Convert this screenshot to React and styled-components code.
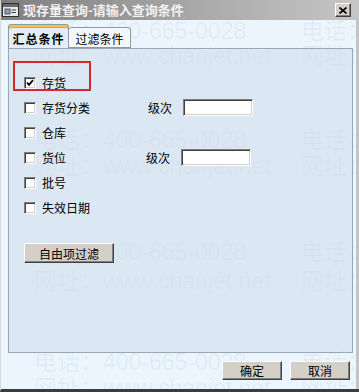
import React from 'react'
import styled, { createGlobalStyle } from 'styled-components'

const Global = createGlobalStyle`
  html, body {
    margin: 0;
    padding: 0;
    background: #ffffff;
  }
  body {
    font-family: "Noto Sans CJK SC", "Liberation Sans", sans-serif;
    font-size: 12px;
  }
`

const Window = styled.div`
  position: relative;
  width: 359px;
  height: 392px;
  box-sizing: border-box;
  display: flex;
  flex-direction: column;
  background: #ebf5fe;
  border-left: 1px solid #d8d8d8;
  border-bottom: 3px solid #3c3c3c;
  overflow: hidden;
`

const TitleBar = styled.div`
  height: 20px;
  flex: none;
  display: flex;
  align-items: center;
  padding: 0 8px 0 1px;
  background: linear-gradient(to right, #7e7e7e, #a9a9a9 55%, #c6c6c6);
`

const Title = styled.div`
  flex: 1;
  margin-left: 4px;
  color: #f2f2f2;
  font-weight: 700;
  font-size: 13px;
  line-height: 20px;
  white-space: nowrap;
`

const CloseBtn = styled.div`
  width: 16px;
  height: 14px;
  box-sizing: border-box;
  display: flex;
  align-items: center;
  justify-content: center;
  background: #d4d0c8;
  border-top: 1px solid #ffffff;
  border-left: 1px solid #ffffff;
  border-right: 1px solid #404040;
  border-bottom: 1px solid #404040;
  box-shadow: inset -1px -1px 0 #808080;
`

const Body = styled.div`
  position: relative;
  flex: 1;
  display: flex;
  flex-direction: column;
  padding: 4px 0 0 7px;
  border-right: 3px solid #c4c4c4;
`

const Watermark = styled.div`
  position: absolute;
  inset: 0;
  pointer-events: none;
  z-index: 0;
`

const Mark = styled.div`
  position: absolute;
  white-space: nowrap;
  font-family: "Liberation Sans", "Noto Sans CJK SC", sans-serif;
  font-size: 23px;
  line-height: 24px;
  color: rgba(40, 60, 80, 0.06);
`

const Tabs = styled.div`
  position: relative;
  z-index: 1;
  height: 24px;
  display: flex;
  align-items: flex-end;
`

const Tab = styled.div`
  box-sizing: border-box;
  height: ${p => (p.$active ? '25px' : '21px')};
  margin-bottom: ${p => (p.$active ? '-1px' : '0')};
  width: ${p => (p.$active ? '61px' : '62px')};
  padding-top: ${p => (p.$active ? '5px' : '2px')};
  text-align: center;
  font-size: 12px;
  font-weight: ${p => (p.$active ? 700 : 400)};
  letter-spacing: ${p => (p.$active ? '1px' : '0')};
  color: #000;
  background: ${p => (p.$active ? '#e4edf5' : '#f3f7fb')};
  border: 1px solid #919b9c;
  border-bottom: ${p => (p.$active ? 'none' : '1px solid #919b9c')};
  border-left: ${p => (p.$active ? '1px solid #919b9c' : 'none')};
  border-radius: 3px 3px 0 0;
  box-shadow: ${p => (p.$active ? 'inset 0 2px 0 #f5c542, inset 0 3px 0 #e7a823' : 'none')};
`

const Panel = styled.div`
  position: relative;
  z-index: 1;
  box-sizing: border-box;
  width: 345px;
  height: 305px;
  padding: 21px 0 0 15px;
  background: rgba(205, 220, 234, 0.55);
  border: 1px solid #9aa8b6;
`

const Highlight = styled.div`
  position: absolute;
  left: 4px;
  top: 12px;
  width: 78px;
  height: 30px;
  box-sizing: border-box;
  border: 2px solid #d42a2a;
  pointer-events: none;
`

const Row = styled.div`
  height: 25px;
  display: flex;
  align-items: center;
`

const CheckItem = styled.div`
  width: ${p => p.$w}px;
  display: flex;
  align-items: center;
  gap: 6px;
`

const Box = styled.div`
  width: 12px;
  height: 12px;
  box-sizing: border-box;
  background: #ffffff;
  border-top: 1px solid #808080;
  border-left: 1px solid #808080;
  border-right: 1px solid #ffffff;
  border-bottom: 1px solid #ffffff;
  box-shadow: inset 1px 1px 0 #404040, inset -1px -1px 0 #d4d0c8;
  display: flex;
  align-items: center;
  justify-content: center;
`

const Label = styled.span`
  font-size: 12px;
  line-height: 14px;
  color: #000;
`

const LevelLabel = styled(Label)`
  width: 35px;
`

const TextInput = styled.div`
  width: 70px;
  height: 17px;
  box-sizing: border-box;
  background: #ffffff;
  border-top: 1px solid #808080;
  border-left: 1px solid #808080;
  border-right: 1px solid #ffffff;
  border-bottom: 1px solid #ffffff;
  box-shadow: inset 1px 1px 0 #404040, inset -1px -1px 0 #d4d0c8;
`

const Button = styled.div`
  width: ${p => p.$w}px;
  height: ${p => p.$h}px;
  box-sizing: border-box;
  display: flex;
  align-items: center;
  justify-content: center;
  font-size: 12px;
  color: #000;
  background: #d4d0c8;
  border-top: 1px solid #ffffff;
  border-left: 1px solid #ffffff;
  border-right: 1px solid #404040;
  border-bottom: 1px solid #404040;
  box-shadow: inset -1px -1px 0 #808080;
`

const FilterButton = styled(Button)`
  margin: 23px 0 0 0;
`

const Footer = styled.div`
  position: relative;
  z-index: 1;
  display: flex;
  justify-content: flex-end;
  gap: 8px;
  margin-top: 8px;
  padding-right: 6px;
`

const AppIcon = () => (
  <svg width="17" height="14" viewBox="0 0 17 14">
    <rect x="0.5" y="0.5" width="16" height="13" fill="#e8e8e8" stroke="#303030" />
    <rect x="1" y="1" width="15" height="3" fill="#6a6a6a" />
    <rect x="3" y="6" width="5" height="5" fill="#8aa0b8" stroke="#404040" strokeWidth="0.8" />
    <line x1="9.5" y1="7" x2="14" y2="7" stroke="#404040" />
    <line x1="9.5" y1="9.5" x2="14" y2="9.5" stroke="#404040" />
  </svg>
)

const CloseIcon = () => (
  <svg width="8" height="7" viewBox="0 0 8 7">
    <path d="M0.5 0.5 L7.5 6.5 M7.5 0.5 L0.5 6.5" stroke="#000" strokeWidth="1.6" />
  </svg>
)

const Check = () => (
  <svg width="8" height="8" viewBox="0 0 8 8">
    <path d="M1 3.5 L3 5.8 L7 1.2" fill="none" stroke="#000" strokeWidth="1.8" />
  </svg>
)

const items = [
  { label: '存货', checked: true },
  { label: '存货分类', level: 2 },
  { label: '仓库' },
  { label: '货位', level: 0 },
  { label: '批号' },
  { label: '失效日期' },
]

const phone = '电话：400-665-0028'
const site = '网址：www.chanjet.net'

// watermark line centres, in page pixels
const markRows = [
  { t: phone, y: 31 },
  { t: site, y: 56 },
  { t: phone, y: 140 },
  { t: site, y: 166 },
  { t: phone, y: 252 },
  { t: site, y: 281 },
  { t: phone, y: 362 },
  { t: site, y: 388 },
]

export default function App() {
  return (
    <>
      <Global />
      <Window>
        <TitleBar>
          <AppIcon />
          <Title>现存量查询-请输入查询条件</Title>
          <CloseBtn><CloseIcon /></CloseBtn>
        </TitleBar>

        <Body>
          <Watermark>
            {markRows.map((m, i) => [33, 300].map(x => (
              <Mark key={i + '-' + x} style={{ left: x, top: m.y - 32 }}>{m.t}</Mark>
            )))}
          </Watermark>

          <Tabs>
            <Tab $active>汇总条件</Tab>
            <Tab>过滤条件</Tab>
          </Tabs>

          <Panel>
            <Highlight />
            {items.map(item => (
              <Row key={item.label}>
                <CheckItem $w={item.level === 0 ? 122 : 124}>
                  <Box>{item.checked && <Check />}</Box>
                  <Label>{item.label}</Label>
                </CheckItem>
                {item.level !== undefined && (
                  <>
                    <LevelLabel>级次</LevelLabel>
                    <TextInput />
                  </>
                )}
              </Row>
            ))}
            <FilterButton $w={90} $h={20}>自由项过滤</FilterButton>
          </Panel>

          <Footer>
            <Button $w={60} $h={19}>确定</Button>
            <Button $w={60} $h={19}>取消</Button>
          </Footer>
        </Body>
      </Window>
    </>
  )
}
